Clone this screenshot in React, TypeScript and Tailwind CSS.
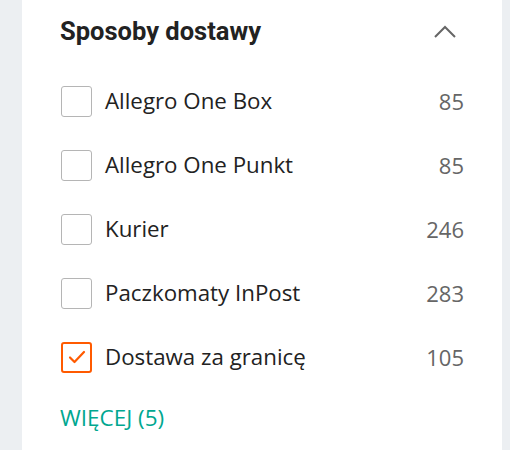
import React from 'react';

const options = [
    { label: 'Allegro One Box', count: 85, checked: false },
    { label: 'Allegro One Punkt', count: 85, checked: false },
    { label: 'Kurier', count: 246, checked: false },
    { label: 'Paczkomaty InPost', count: 283, checked: false },
    { label: 'Dostawa za granicę', count: 105, checked: true },
];

const Checkbox = ({ checked }: { checked: boolean }) => (
    <div
        className={
            checked
                ? 'w-[31px] h-[31px] rounded-[3px] border-[2.5px] border-[#ff5a00] flex items-center justify-center shrink-0'
                : 'w-[31px] h-[31px] rounded-[3px] border border-[#b5b5b5] shrink-0'
        }
    >
        {checked && (
            <svg width="20" height="20" viewBox="0 0 20 20" fill="none">
                <path d="M3 10.5 L7.5 15 L17 5" stroke="#ff5a00" strokeWidth="2.2" strokeLinecap="round" strokeLinejoin="round" />
            </svg>
        )}
    </div>
);

export default function App() {
    return (
        <div className="w-[510px] h-[450px] bg-[#eceff2] pl-[22px] pr-[8px] overflow-hidden">
            <div className="bg-white h-full pl-[38px] pr-[38px] pt-[15px]">
                <div className="flex items-center justify-between h-[34px]">
                    <h2 className="text-[25.5px] font-bold text-[#222] font-['Roboto',sans-serif] leading-none">
                        Sposoby dostawy
                    </h2>
                    <svg width="24" height="24" viewBox="0 0 24 24" fill="none" className="mr-[7px]">
                        <path d="M2 17 L12 7 L22 17" stroke="#666" strokeWidth="2" />
                    </svg>
                </div>
                <div className="mt-[20px] font-['Open_Sans',sans-serif]">
                    {options.map(o => (
                        <div key={o.label} className="flex items-center h-[64px] pl-[1px]">
                            <Checkbox checked={o.checked} />
                            <span className="ml-[13px] flex-1 text-[22.3px] text-[#222]">{o.label}</span>
                            <span className="text-[22px] text-[#666]">{o.count}</span>
                        </div>
                    ))}
                </div>
                <div className="mt-[14px] font-['Open_Sans',sans-serif] text-[22.5px] leading-[30px] text-[#00a790]">
                    WIĘCEJ (5)
                </div>
            </div>
        </div>
    );
}
